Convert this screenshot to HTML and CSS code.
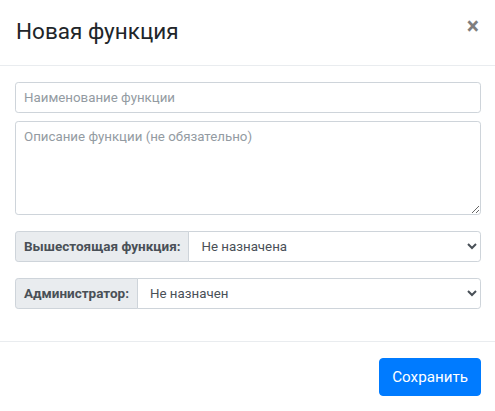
FILE: index.html
```html
<!DOCTYPE html>
<html lang="ru">
<head>
<meta charset="utf-8">
<title>Новая функция</title>
<link rel="stylesheet" href="styles.css">
</head>
<body>
<div class="modal">
  <div class="modal-header">
    <h4 class="modal-title">Новая функция</h4>
    <button class="close" type="button" aria-label="Close">×</button>
  </div>
  <div class="modal-body">
    <input class="form-control mb-2" type="text" placeholder="Наименование функции">
    <textarea class="form-control textarea mb-3" rows="4" placeholder="Описание функции (не обязательно)"></textarea>
    <div class="input-group mb-3">
      <span class="input-group-text">Вышестоящая функция:</span>
      <select class="form-control select"><option>Не назначена</option></select>
    </div>
    <div class="input-group mb-3">
      <span class="input-group-text">Администратор:</span>
      <select class="form-control select"><option>Не назначен</option></select>
    </div>
  </div>
  <div class="modal-footer">
    <button class="btn-primary" type="button">Сохранить</button>
  </div>
</div>
</body>
</html>
```
FILE: styles.css
```css
* { box-sizing: border-box; }
html, body { margin: 0; padding: 0; background: #fff; }
body {
  font-family: Roboto, "Noto Sans", sans-serif;
  color: #212529;
  overflow: hidden;
}
.modal { width: 100%; }
.modal-header {
  display: flex;
  align-items: flex-start;
  height: 66px;
  padding: 13px 16px 0 16px;
  border-bottom: 1px solid #e9ecef;
}
.modal-title {
  margin: 0;
  font-size: 22.5px;
  font-weight: 400;
  line-height: 36px;
  color: #212529;
}
.close {
  margin-left: auto;
  margin-top: 2px;
  padding: 0;
  border: 0;
  background: transparent;
  font-family: Roboto, sans-serif;
  font-size: 23px;
  font-weight: 700;
  line-height: 1;
  color: #000;
  opacity: .5;
  text-shadow: 0 1px 0 #fff;
}
.modal-body {
  padding: 16px 14px 16px 15px;
}
.form-control {
  display: block;
  width: 100%;
  height: 31px;
  padding: 4px 8px;
  font-family: inherit;
  font-size: 13.3px;
  line-height: 21px;
  color: #495057;
  background: #fff;
  border: 1px solid #ced4da;
  border-radius: 3.2px;
  outline: none;
}
.form-control::placeholder { color: #939ba2; opacity: 1; }
.textarea { height: 94px; resize: vertical; }
.mb-2 { margin: 0 0 8px 0; }
.mb-3 { margin: 0 0 16px 0; }
.input-group {
  display: flex;
  align-items: stretch;
}
.input-group-text {
  display: flex;
  align-items: center;
  padding: 4px 8px;
  font-size: 13.5px;
  font-weight: 700;
  line-height: 21px;
  color: #495057;
  background: #e9ecef;
  border: 1px solid #ced4da;
  border-radius: 3.2px 0 0 3.2px;
  white-space: nowrap;
}
.select {
  flex: 1 1 auto;
  width: 1%;
  margin-left: -1px;
  border-radius: 0 3.2px 3.2px 0;
}
.modal-footer {
  display: flex;
  justify-content: flex-end;
  padding: 16px 14px 16px 15px;
  border-top: 1px solid #e9ecef;
}
.btn-primary {
  height: 38px;
  padding: 6px 12px;
  font-family: inherit;
  font-size: 15.2px;
  line-height: 24px;
  color: #fff;
  background: #007bff;
  border: 1px solid #007bff;
  border-radius: 4px;
}
```
